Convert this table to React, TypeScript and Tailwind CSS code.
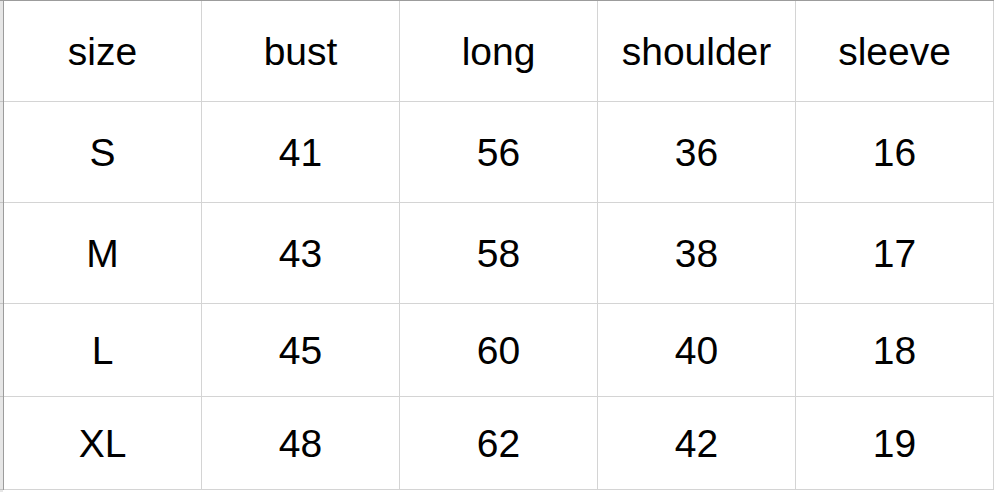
import React from "react";

const header = ["size", "bust", "long", "shoulder", "sleeve"];
const rows = [
  ["S", "41", "56", "36", "16"],
  ["M", "43", "58", "38", "17"],
  ["L", "45", "60", "40", "18"],
  ["XL", "48", "62", "42", "19"],
];

export default function App() {
  const all = [header, ...rows];
  const heights = ["h-[101px]", "h-[101px]", "h-[101px]", "h-[93px]", "h-[93px]"];
  return (
    <div
      className="w-[996px] h-[492px] overflow-hidden bg-white flex text-black"
      style={{ fontFamily: '"Liberation Sans", Arial, sans-serif' }}
    >
      <div className="w-[3px] flex flex-col bg-[#e6e6e6]">
        <div className="h-[1px] bg-[#9c9c9c]" />
        {heights.map((h, i) => (
          <div key={i} className={`${i < 3 ? "h-[100px]" : "h-[92px]"} border-b border-[#c4c4c4] box-content`} />
        ))}
      </div>
      <div className="flex flex-col border-l border-t border-l-[#9c9c9c] border-t-[#9c9c9c] self-start">
        {all.map((r, i) => (
          <div key={i} className={`flex ${i < 3 ? "h-[101px]" : "h-[93px]"}`}>
            {r.map((c, j) => (
              <div
                key={j}
                className="w-[198px] h-full border-r border-b border-[#d4d4d4] flex items-center justify-center text-[39px] leading-none"
              >
                {c}
              </div>
            ))}
          </div>
        ))}
      </div>
    </div>
  );
}
